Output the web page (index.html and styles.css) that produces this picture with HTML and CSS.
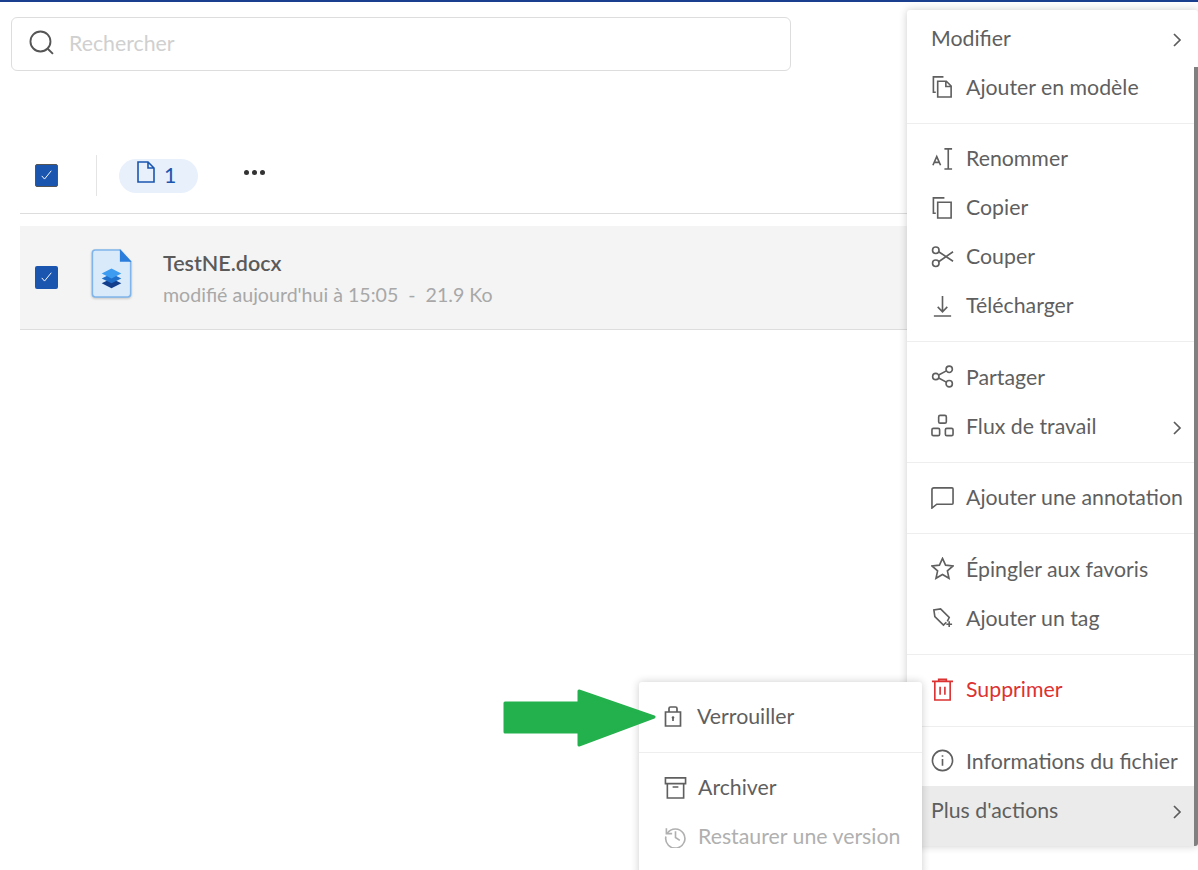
FILE: index.html
```html
<!DOCTYPE html>
<html lang="fr">
<head>
<meta charset="utf-8">
<title>Fichiers</title>
<link rel="stylesheet" href="styles.css">
</head>
<body>
<div class="topline"></div>
<main class="page">
  <div class="search">
    <svg class="search-icon" viewBox="0 0 24 24"><circle cx="11" cy="11" r="9.6"/><path d="M18 18l5 5"/></svg>
    <span class="placeholder">Rechercher</span>
  </div>
  <div class="toolbar">
    <span class="check outlined"><svg viewBox="0 0 24 24"><path d="M6 12.500l3.500 4 8.500-10.500"/></svg></span>
    <span class="vsep"></span>
    <span class="pill">
      <svg class="pill-icon" viewBox="0 0 18 22"><path d="M1 1h10l6 6v14H1zM11 1v6h6"/></svg>
      <span class="pill-count">1</span>
    </span>
    <span class="dots"><i></i><i></i><i></i></span>
  </div>
  <div class="file-row">
    <span class="check"><svg viewBox="0 0 24 24"><path d="M6 12.500l3.500 4 8.500-10.500"/></svg></span>
    <svg class="file-icon" viewBox="0 0 42 52">
      <path class="doc" d="M4 2h25l11 12v33a3 3 0 0 1-3 3H4a3 3 0 0 1-3-3V5a3 3 0 0 1 3-3z"/>
      <path class="fold" d="M29 1l12 13H29z"/>
      <path class="l3" d="M20.500 31l10 5-10 5-10-5z"/>
      <path class="l2" d="M20.500 26l10 5-10 5-10-5z"/>
      <path class="l1" d="M20.500 21l10 5-10 5-10-5z"/>
    </svg>
    <div class="file-text">
      <div class="file-name">TestNE.docx</div>
      <div class="file-meta">modifié aujourd'hui à 15:05 &nbsp;-&nbsp; 21.9 Ko</div>
    </div>
  </div>
</main>

<nav class="menu menu-main">
  <div class="group first">
    <div class="item"><span class="label plain">Modifier</span><svg class="chev" viewBox="0 0 10 16"><path d="M2 2l6 6-6 6"/></svg></div>
    <div class="item"><svg class="ico" viewBox="0 0 24 24"><path d="M5 18H2.500V2H13"/><path d="M7 6.500h9l5 5V23H7zM15.500 6.500v5.500H21"/></svg><span class="label">Ajouter en modèle</span></div>
  </div>
  <div class="group">
    <div class="item"><svg class="ico" viewBox="0 0 24 24"><path d="M2 19l4-9 4 9M3.500 16h5"/><path d="M14 2h8M18 2v21M14 23h8"/></svg><span class="label">Renommer</span></div>
    <div class="item"><svg class="ico" viewBox="0 0 24 24"><path d="M5 18H2.500V2H14"/><path d="M7 6.500h14V23H7z"/></svg><span class="label">Copier</span></div>
    <div class="item"><svg class="ico" viewBox="0 0 24 24"><circle cx="5" cy="5.500" r="3.400"/><circle cx="5" cy="19" r="3.400"/><path d="M8 7l15 10M8 17.500L23 7"/></svg><span class="label">Couper</span></div>
    <div class="item"><svg class="ico" viewBox="0 0 24 24"><path d="M12 2v16M7 13.500l5 5 5-5M3 23h18"/></svg><span class="label">Télécharger</span></div>
  </div>
  <div class="group">
    <div class="item"><svg class="ico" viewBox="0 0 24 24"><circle cx="5" cy="12" r="3.300"/><circle cx="19" cy="4.500" r="3.300"/><circle cx="19" cy="19.500" r="3.300"/><path d="M8 10.400l8-4.300M8 13.600l8 4.300"/></svg><span class="label">Partager</span></div>
    <div class="item"><svg class="ico" viewBox="0 0 24 24"><rect x="8" y="1.500" width="8" height="8" rx="1.500"/><rect x="1" y="15" width="8" height="7.500" rx="1.500"/><rect x="15" y="15" width="8" height="7.500" rx="1.500"/></svg><span class="label">Flux de travail</span><svg class="chev" viewBox="0 0 10 16"><path d="M2 2l6 6-6 6"/></svg></div>
  </div>
  <div class="group">
    <div class="item"><svg class="ico" viewBox="0 0 24 24"><path d="M3 2h19a1 1 0 0 1 1 1v15a1 1 0 0 1-1 1H6l-5 4V4a2 2 0 0 1 2-2z"/></svg><span class="label">Ajouter une annotation</span></div>
  </div>
  <div class="group">
    <div class="item"><svg class="ico" viewBox="0 0 24 24"><path d="M12 1.500l3.200 7 7.800.8-5.900 5.200 1.700 7.700-6.800-4-6.800 4 1.700-7.700L1 9.300l7.800-.8z"/></svg><span class="label">Épingler aux favoris</span></div>
    <div class="item"><svg class="ico" viewBox="0 0 24 24"><path d="M17 16l2-4-9-9-7 1 1 7 9 9 3-3"/><path d="M19 16v6M16 19h6M7.500 7h.1"/></svg><span class="label">Ajouter un tag</span></div>
  </div>
  <div class="group">
    <div class="item danger"><svg class="ico" viewBox="0 0 24 24"><path d="M1 3.500h22M8 3.500V1.500h8v2M4 3.500V23h16V3.500M9.500 9v8.500M14.500 9v8.500"/></svg><span class="label">Supprimer</span></div>
  </div>
  <div class="group last">
    <div class="item"><svg class="ico" viewBox="0 0 24 24"><circle cx="12" cy="12" r="10.500"/><path d="M12 10.500v7M12 6.500v1.500"/></svg><span class="label">Informations du fichier</span></div>
    <div class="item active"><span class="label plain">Plus d'actions</span><svg class="chev" viewBox="0 0 10 16"><path d="M2 2l6 6-6 6"/></svg></div>
  </div>
  <div class="thumb"></div>
</nav>

<nav class="menu menu-sub">
  <div class="group first">
    <div class="item"><svg class="ico small" viewBox="0 0 18 22"><path d="M1.500 7h15v14h-15zM5 7V3.500a1.500 1.500 0 0 1 1.500-1.500h5A1.500 1.500 0 0 1 13 3.500V7"/><path class="key" d="M9 12v4"/><circle class="keyhead" cx="9" cy="12.500" r="1.300"/></svg><span class="label">Verrouiller</span></div>
  </div>
  <div class="group">
    <div class="item"><svg class="ico" viewBox="0 0 24 24"><path d="M1.500 2h21v6h-21zM3.500 8v15h17V8M9 11.500h6"/></svg><span class="label">Archiver</span></div>
    <div class="item disabled"><svg class="ico" viewBox="0 0 24 24"><path d="M3.500 8.500A10 10 0 1 1 2 12"/><path d="M2.500 3.500v5.500h6M12 6.500V13l4.500 3"/></svg><span class="label">Restaurer une version</span></div>
  </div>
</nav>

<svg class="arrow" viewBox="0 0 154 60"><path d="M2 14h74V2l75 26-75 28V43H2z"/></svg>
</body>
</html>
```
FILE: styles.css
```css
* { box-sizing: border-box; }
html, body { margin: 0; height: 100%; }
body {
  position: relative;
  height: 870px;
  overflow: hidden;
  background: #fff;
  color: #555;
  font-family: "Lato", "Noto Sans", sans-serif;
  font-size: 21.300px;
}
.topline { height: 2px; background: #1a3f8f; }
.page { display: flex; flex-direction: column; align-items: stretch; }

.search {
  display: flex;
  align-items: center;
  gap: 15px;
  width: 780px;
  height: 54px;
  margin: 15px 0 0 11px;
  padding-left: 17px;
  border: 1px solid #ddd;
  border-radius: 6px;
}
.search-icon { width: 25px; height: 25px; margin-top: -3px; fill: none; stroke: #555; stroke-width: 1.8; }
.placeholder { margin-top: -2px; color: #d0d0d0; }

.toolbar {
  display: flex;
  align-items: center;
  height: 71px;
  margin: 72px 0 0 20px;
  padding: 0 0 6px 15px;
  border-bottom: 1px solid #ddd;
}
.check {
  display: flex;
  align-items: center;
  justify-content: center;
  flex: none;
  width: 23px;
  height: 23px;
  border-radius: 2px;
  background: #1a56b0;
}
.check.outlined { border: 1px solid #555; }
.check svg { width: 19px; height: 19px; fill: none; stroke: #fff; stroke-width: 1.200; }
.vsep { width: 1px; height: 41px; margin: 0 22px 0 38px; background: #e4e4e4; }
.pill {
  display: flex;
  align-items: center;
  gap: 9px;
  width: 79px;
  height: 34px;
  margin-top: 2px;
  padding-left: 18px;
  border-radius: 17px;
  background: #e8f0fb;
  color: #1a56b0;
}
.pill-count { margin-top: -3px; }
.pill-icon { width: 18px; height: 22px; margin-top: -8px; fill: none; stroke: #1a56b0; stroke-width: 1.6; }
.dots { display: flex; gap: 3px; margin: -6px 0 0 46px; }
.dots i { width: 5px; height: 5px; border-radius: 50%; background: #333; }

.file-row {
  display: flex;
  align-items: center;
  height: 104px;
  margin: 12px 0 0 20px;
  padding-left: 15px;
  background: #f4f4f4;
  border-bottom: 1px solid #ddd;
}
.file-icon { flex: none; width: 42px; height: 51px; margin: -8px 30px 0 33px; filter: drop-shadow(0 1px 1px rgba(0,0,0,.2)); }
.doc { fill: #d9ebfb; stroke: #7fb5ea; stroke-width: 1.6; }
.fold { fill: #2a7ddb; }
.l1 { fill: #3d9cf0; }
.l2 { fill: #1f6fcb; }
.l3 { fill: #123e8c; }
.file-name { font-size: 21.500px; font-weight: 600; color: #5a5a5a; line-height: 30px; margin-top: 2px; }
.file-meta { font-size: 19.600px; color: #a8a8a8; line-height: 30px; margin-top: 2px; }

.menu {
  position: absolute;
  background: #fff;
  border-radius: 3px;
  box-shadow: 0 0 9px rgba(0,0,0,.2);
}
.menu-main { top: 10px; left: 907px; width: 291px; height: 836px; overflow: hidden; }
.menu-sub { top: 682px; left: 639px; width: 283px; height: 200px; }
.group { padding: 11px 0 10.600px; border-bottom: 1px solid #eee; }
.group.first { padding-top: 4px; }
.menu-sub .group.first { padding-top: 10px; }
.group.last { padding-top: 10.500px; }
.group.last, .menu-sub .group:last-child { border-bottom: 0; padding-bottom: 0; }
.item {
  display: flex;
  align-items: center;
  height: 49px;
  padding: 0 0 2px 24px;
  color: #5f5f5f;
  white-space: nowrap;
}
.ico {
  flex: none;
  width: 23px;
  height: 23px;
  margin-right: 12px;
  fill: none;
  stroke: #5f5f5f;
  stroke-width: 1.7;
}
.ico.small { width: 18px; height: 22px; margin-right: 15px; }
.keyhead { fill: #5f5f5f; stroke: none; }
.chev { width: 10px; height: 16px; margin: 4px 16px 0 auto; fill: none; stroke: #5c5c5c; stroke-width: 1.7; }
.danger { color: #dc3232; }
.danger .ico { stroke: #dc3232; }
.active { height: 60px; padding-bottom: 13px; background: #ebebeb; }
.disabled { color: #b0b0b0; }
.disabled .ico { stroke: #b0b0b0; }
.thumb { position: absolute; top: 57px; right: 0; width: 4px; bottom: 0; background: #808080; }
.menu-sub .item { padding-left: 25px; }
.menu-sub .ico:not(.small) { margin-right: 11px; }
.arrow { position: absolute; left: 503px; top: 689px; width: 154px; height: 60px; fill: #22b14c; stroke: #22b14c; stroke-width: 3; stroke-linejoin: round; }
```
